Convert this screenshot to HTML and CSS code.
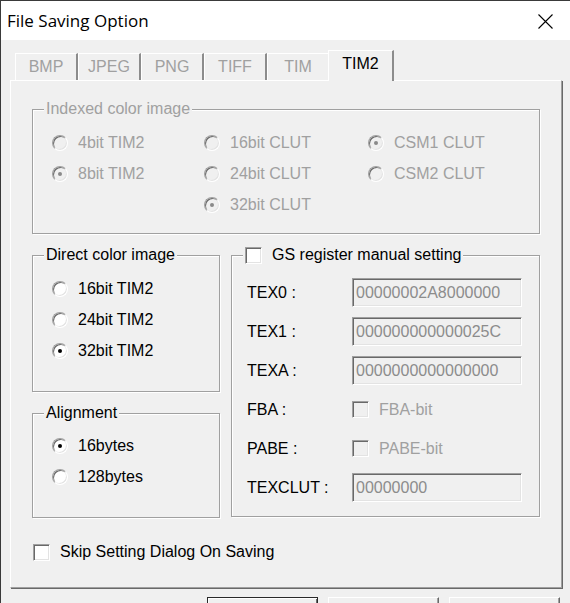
FILE: index.html
```html
<!DOCTYPE html>
<html>
<head>
<meta charset="utf-8">
<link rel="stylesheet" href="styles.css">
</head>
<body>
<div class="window">
  <div class="titlebar">
    <span class="title">File Saving Option</span>
    <svg class="close" width="15" height="15" viewBox="0 0 15 15"><path d="M0.5 0.5 L14.5 14.5 M14.5 0.5 L0.5 14.5" stroke="#000" stroke-width="1.1" fill="none"/></svg>
  </div>
  <div class="tabs">
    <div class="tab">BMP</div>
    <div class="tab">JPEG</div>
    <div class="tab">PNG</div>
    <div class="tab">TIFF</div>
    <div class="tab">TIM</div>
    <div class="tab active">TIM2</div>
  </div>
  <div class="panel">
    <fieldset class="group indexed disabled">
      <legend>Indexed color image</legend>
      <div class="radio-grid">
        <div class="opt"><span class="radio"></span>4bit TIM2</div>
        <div class="opt"><span class="radio"></span>16bit CLUT</div>
        <div class="opt"><span class="radio on"></span>CSM1 CLUT</div>
        <div class="opt"><span class="radio on"></span>8bit TIM2</div>
        <div class="opt"><span class="radio"></span>24bit CLUT</div>
        <div class="opt"><span class="radio"></span>CSM2 CLUT</div>
        <div class="opt"></div>
        <div class="opt"><span class="radio on"></span>32bit CLUT</div>
      </div>
    </fieldset>
    <div class="columns">
      <div class="col-left">
        <fieldset class="group direct">
          <legend>Direct color image</legend>
          <div class="radio-list">
            <div class="opt"><span class="radio"></span>16bit TIM2</div>
            <div class="opt"><span class="radio"></span>24bit TIM2</div>
            <div class="opt"><span class="radio on"></span>32bit TIM2</div>
          </div>
        </fieldset>
        <fieldset class="group align">
          <legend>Alignment</legend>
          <div class="radio-list">
            <div class="opt"><span class="radio on"></span>16bytes</div>
            <div class="opt"><span class="radio"></span>128bytes</div>
          </div>
        </fieldset>
      </div>
      <fieldset class="group gs">
        <legend class="check-legend"><span class="check"></span>GS register manual setting</legend>
        <div class="reg-grid">
          <span class="reg-label">TEX0 :</span><span class="field">00000002A8000000</span>
          <span class="reg-label">TEX1 :</span><span class="field">000000000000025C</span>
          <span class="reg-label">TEXA :</span><span class="field">0000000000000000</span>
          <span class="reg-label">FBA :</span><span class="bit"><span class="check dis"></span>FBA-bit</span>
          <span class="reg-label">PABE :</span><span class="bit"><span class="check dis"></span>PABE-bit</span>
          <span class="reg-label">TEXCLUT :</span><span class="field">00000000</span>
        </div>
      </fieldset>
    </div>
    <div class="skip"><span class="check"></span>Skip Setting Dialog On Saving</div>
  </div>
  <div class="buttons">
    <span class="btn default"></span>
    <span class="btn"></span>
    <span class="btn"></span>
  </div>
</div>
</body>
</html>
```

FILE: styles.css
```css
html, body {
  margin: 0;
  padding: 0;
  background: #f0f0f0;
}
body {
  font-family: "Liberation Sans", Arial, sans-serif;
  font-size: 16px;
  line-height: 18px;
  color: #000;
}
.window {
  width: 570px;
  height: 603px;
  box-sizing: border-box;
  border-left: 1px solid #3a3a3a;
  border-top: 1px solid #3a3a3a;
  background: #f0f0f0;
  overflow: hidden;
}
.titlebar {
  height: 39px;
  background: #fff;
  display: flex;
  align-items: center;
  justify-content: space-between;
  padding: 0 17px 0 6px;
}
.title {
  font-family: "Open Sans", "Noto Sans", sans-serif;
  font-size: 17px;
  line-height: 22px;
  margin-top: 1px;
}
.close {
  display: block;
  margin-top: 2px;
}
.tabs {
  height: 40px;
  display: flex;
  align-items: flex-end;
  padding-left: 14px;
}
.tab {
  width: 63px;
  height: 27px;
  box-sizing: border-box;
  border-top: 1px solid #fff;
  border-left: 1px solid #fff;
  border-right: 2px solid #8c8c8c;
  color: #a0a0a0;
  text-align: center;
  line-height: 26px;
  padding-top: 0;
}
.tab.active {
  width: 66px;
  height: 31px;
  margin-left: -2px;
  margin-bottom: -1px;
  color: #000;
  background: #f0f0f0;
  position: relative;
  z-index: 1;
  line-height: 26px;
}
.panel {
  margin-left: 9px;
  width: 552px;
  height: 508px;
  box-sizing: border-box;
  border-top: 1px solid #fff;
  border-left: 1px solid #fff;
  border-right: 1px solid #a0a0a0;
  border-bottom: 1px solid #a0a0a0;
  box-shadow: 1px 1px 0 #696969;
  padding: 19px 0 0 21px;
}
.group {
  margin: 0;
  min-width: 0;
  box-sizing: border-box;
  border: 1px solid #a0a0a0;
  box-shadow: inset 1px 1px 0 #fff, 1px 1px 0 #fff;
  padding: 9px 0 0 11px;
}
.group legend {
  padding: 0 2px;
  line-height: 18px;
  height: 18px;
  background: #f0f0f0;
}
.disabled, .disabled legend {
  color: #a0a0a0;
}
.indexed {
  width: 508px;
  height: 134px;
}
.radio-grid {
  display: grid;
  grid-template-columns: 152px 164px auto;
  grid-auto-rows: 31px;
  padding-left: 8px;
}
.radio-list {
  display: grid;
  grid-auto-rows: 31px;
  padding-left: 8px;
}
.opt {
  display: flex;
  align-items: center;
  gap: 10px;
  white-space: nowrap;
}
.radio {
  width: 16px;
  height: 16px;
  box-sizing: border-box;
  border-radius: 50%;
  border: 1px solid;
  border-color: #a0a0a0 #fff #fff #a0a0a0;
  box-shadow: inset 1px 1px 0 #696969, inset -1px -1px 0 #e3e3e3;
  background: #fff;
  display: flex;
  align-items: center;
  justify-content: center;
  flex: none;
}
.radio.on::after {
  content: "";
  width: 4px;
  height: 4px;
  border-radius: 50%;
  background: #000;
}
.disabled .radio {
  background: #f0f0f0;
}
.disabled .radio.on::after {
  background: #8a8a8a;
}
.columns {
  display: grid;
  grid-template-columns: 188px 309px;
  column-gap: 11px;
  margin-top: 12px;
  align-items: start;
}
.col-left {
  display: flex;
  flex-direction: column;
  gap: 12px;
}
.direct {
  height: 146px;
}
.align {
  height: 114px;
  padding-top: 8px;
}
.gs {
  height: 271px;
}
.check-legend {
  display: flex;
  align-items: center;
  gap: 10px;
}
.check {
  width: 17px;
  height: 17px;
  box-sizing: border-box;
  border: 1px solid;
  border-color: #a0a0a0 #fff #fff #a0a0a0;
  box-shadow: inset 1px 1px 0 #696969, inset -1px -1px 0 #e3e3e3;
  background: #fff;
  flex: none;
}
.check.dis {
  background: #f0f0f0;
}
.reg-grid {
  display: grid;
  grid-template-columns: 105px 170px;
  grid-auto-rows: 39px;
  align-items: center;
  padding-left: 4px;
}
.field {
  height: 29px;
  box-sizing: border-box;
  border: 1px solid;
  border-color: #a0a0a0 #fff #fff #a0a0a0;
  box-shadow: inset 1px 1px 0 #696969, inset -1px -1px 0 #e3e3e3;
  background: #f0f0f0;
  color: #8c8c8c;
  padding-left: 3px;
  line-height: 27px;
  overflow: hidden;
  white-space: nowrap;
}
.bit {
  display: flex;
  align-items: center;
  gap: 10px;
  color: #a0a0a0;
}
.skip {
  display: flex;
  align-items: center;
  gap: 10px;
  margin-top: 25px;
  margin-left: 1px;
  height: 18px;
}
.buttons {
  display: flex;
  gap: 10px;
  padding-left: 206px;
  margin-top: 9px;
}
.btn {
  width: 111px;
  height: 32px;
  box-sizing: border-box;
  border: 1px solid;
  border-color: #fff #696969 #696969 #fff;
  box-shadow: inset -1px -1px 0 #a0a0a0;
  background: #f0f0f0;
}
.btn.default {
  border: 1px solid #2a2a2a;
  box-shadow: inset 1px 1px 0 #fff, inset -1px -1px 0 #696969;
}
```
